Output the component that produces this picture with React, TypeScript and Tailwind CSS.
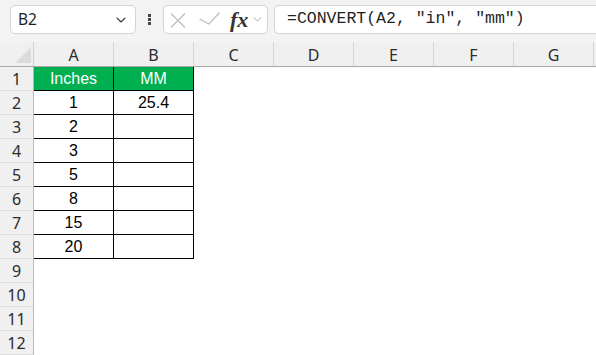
import { ChevronDown } from "lucide-react";

const cols = ["A", "B", "C", "D", "E", "F", "G"];
const data: Record<number, [string, string]> = {
  1: ["Inches", "MM"],
  2: ["1", "25.4"],
  3: ["2", ""],
  4: ["3", ""],
  5: ["5", ""],
  6: ["8", ""],
  7: ["15", ""],
  8: ["20", ""],
};
const rows = Array.from({ length: 12 }, (_, i) => i + 1);

const uiFont = { fontFamily: '"Noto Sans", "Open Sans", sans-serif' };

function App() {
  return (
    <div className="w-[596px] h-[355px] overflow-hidden bg-white select-none">
      {/* toolbar */}
      <div className="h-[42px] bg-[#f3f3f3] flex items-start pt-[5px]">
        <div
          className="ml-[10px] w-[126px] h-[29px] rounded-[5px] border border-[#d4d4d4] bg-white flex items-center justify-between pl-[7px] pr-[6px] text-[15.5px] text-[#1f1f1f]"
          style={uiFont}
        >
          <span>B2</span>
          <ChevronDown size={16} strokeWidth={1.6} className="text-[#3a3a3a]" />
        </div>
        <div className="w-[27px] h-[29px] flex flex-col items-center justify-center gap-[1.5px]">
          <span className="w-[2.5px] h-[2.5px] bg-[#444]" />
          <span className="w-[2.5px] h-[2.5px] bg-[#444]" />
          <span className="w-[2.5px] h-[2.5px] bg-[#444]" />
        </div>
        <div className="w-[105px] h-[29px] rounded-[5px] border border-[#d4d4d4] bg-white flex items-center pl-[6px]">
          <svg width="16" height="15" viewBox="0 0 16 15" className="mt-[1px]">
            <path d="M1 0.5 L15 14.5 M15 0.5 L1 14.5" stroke="#bdbdbd" strokeWidth="1.2" fill="none" />
          </svg>
          <svg width="21" height="13" viewBox="0 0 21 13" className="ml-[13px] -mt-[2px]">
            <path d="M0.5 7 L10 12 L20.5 0.5" stroke="#bdbdbd" strokeWidth="1.2" fill="none" />
          </svg>
          <span
            className="ml-[10px] text-[22px] italic font-bold text-[#333] leading-none"
            style={{ fontFamily: '"Liberation Serif", serif' }}
          >
            fx
          </span>
          <ChevronDown size={13} strokeWidth={1.4} className="text-[#8a8a8a] ml-[3px]" />
        </div>
        <div
          className="ml-[6px] flex-1 h-[29px] rounded-l-[5px] border border-r-0 border-[#d4d4d4] bg-white flex items-center pl-[12px] text-[16.5px] text-[#1f1f1f]"
          style={{ fontFamily: '"Liberation Mono", monospace' }}
        >
          =CONVERT(A2, "in", "mm")
        </div>
      </div>

      {/* column headers */}
      <div className="flex h-[25px] bg-[#f0f0f0] border-b border-[#a8a8a8]" style={uiFont}>
        <div className="w-[34px] shrink-0 border-r border-[#d0d0d0] flex items-end justify-end pr-[2px] pb-[3px]">
          <svg width="16" height="16" viewBox="0 0 16 16">
            <polygon points="16,0 16,16 0,16" fill="#dcdcdc" />
          </svg>
        </div>
        {cols.map((c) => (
          <div
            key={c}
            className="w-[80px] shrink-0 border-r border-[#d4d4d4] flex items-center justify-center pt-[1px] text-[16px] text-[#2b2b2b]"
          >
            {c}
          </div>
        ))}
        <div className="flex-1" />
      </div>

      {/* rows */}
      {rows.map((r) => {
        const d = data[r];
        return (
          <div key={r} className="flex h-[24px]">
            <div
              className="w-[34px] shrink-0 bg-[#f0f0f0] border-r border-[#b8b8b8] border-b border-b-[#dcdcdc] flex items-center justify-center pt-[1px] text-[16px] text-[#2b2b2b]"
              style={uiFont}
            >
              {r}
            </div>
            {d &&
              d.map((v, i) => (
                <div
                  key={i}
                  className={
                    "w-[80px] shrink-0 border-r border-b border-black flex items-center justify-center pt-[1px] text-[16px] " +
                    (r === 1 ? "bg-[#00b050] text-white" : "text-black")
                  }
                  style={{ fontFamily: '"Liberation Sans", Arial, sans-serif' }}
                >
                  {v}
                </div>
              ))}
          </div>
        );
      })}
    </div>
  );
}

export default App;
